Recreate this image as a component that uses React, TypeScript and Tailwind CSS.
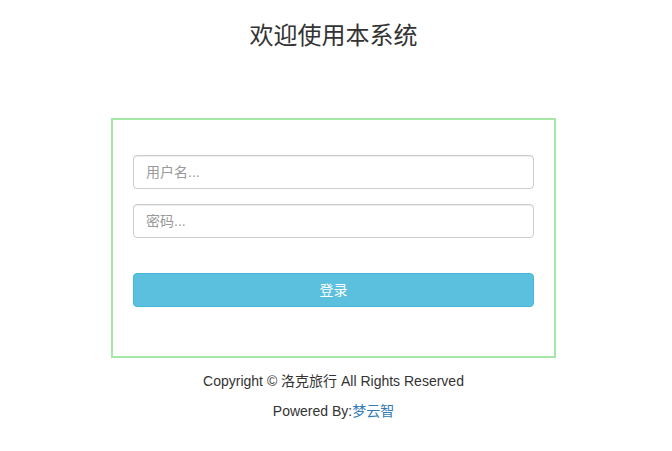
export default function App() {
  const font = {
    fontFamily:
      '"Liberation Sans", "Noto Sans CJK SC", Arial, sans-serif',
  };

  return (
    <div className="min-h-[451px] bg-white text-[#333] text-sm" style={font}>
      <div className="w-[667px] flex flex-col items-center">
        <h2 className="mt-[22px] h-[28px] text-[24px] leading-[28px] font-normal">
          欢迎使用本系统
        </h2>

        <form className="mt-[68px] w-[445px] border-2 border-[#a6e6a6] px-[20px] pt-[35px] pb-[49px] flex flex-col">
          <input
            type="text"
            placeholder="用户名..."
            className="h-[34px] w-full rounded border border-[#ccc] px-3 text-sm text-[#555] placeholder:text-[#999] shadow-[inset_0_1px_1px_rgba(0,0,0,0.075)] outline-none"
          />
          <input
            type="password"
            placeholder="密码..."
            className="mt-[15px] h-[34px] w-full rounded border border-[#ccc] px-3 text-sm text-[#555] placeholder:text-[#999] shadow-[inset_0_1px_1px_rgba(0,0,0,0.075)] outline-none"
          />
          <button
            type="button"
            className="mt-[35px] h-[34px] w-full rounded border border-[#46b8da] bg-[#5bc0de] text-sm text-white"
          >
            登录
          </button>
        </form>

        <p className="mt-[13px] leading-5">
          Copyright © 洛克旅行 All Rights Reserved
        </p>
        <p className="mt-[10px] leading-5">
          Powered By:<a className="text-[#337ab7]">梦云智</a>
        </p>
      </div>
    </div>
  );
}
